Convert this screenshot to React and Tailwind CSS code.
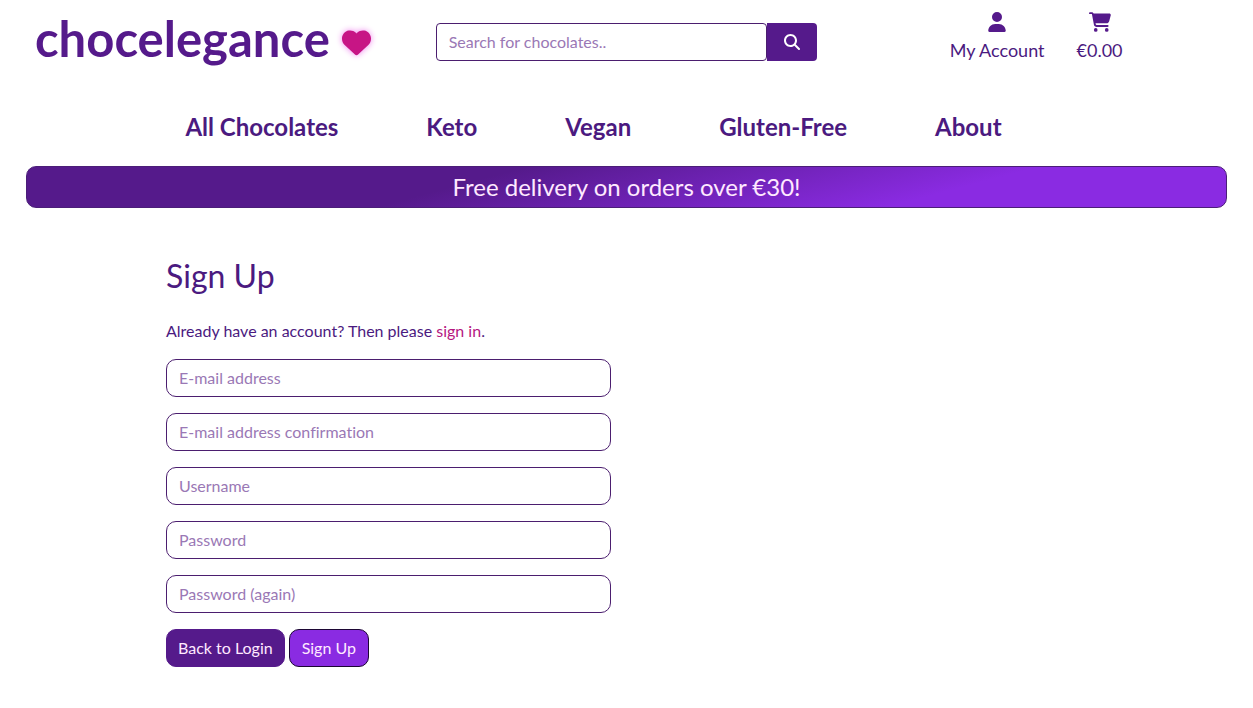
import { FaHeart, FaUser, FaCartShopping, FaMagnifyingGlass } from "react-icons/fa6";

const links = ["All Chocolates", "Keto", "Vegan", "Gluten-Free", "About"];

const fields = [
  { id: "email", label: "E-mail address", type: "email" },
  { id: "email2", label: "E-mail address confirmation", type: "email" },
  { id: "username", label: "Username", type: "text" },
  { id: "password1", label: "Password", type: "password" },
  { id: "password2", label: "Password (again)", type: "password" },
];

function Header() {
  return (
    <header className="grid grid-cols-3 items-start">
      <a href="#" className="mt-2 flex items-center gap-3 pl-[35px] text-[49px] leading-[60px] font-bold text-[#551a8b]">
        chocelegance
        <FaHeart className="mt-2 size-[29px] shrink-0 text-[#c71585] drop-shadow-[0_0_3px_#ee82ee]" aria-hidden="true" />
      </a>
      <form className="mt-[23px] flex px-[18px]" onSubmit={(e) => e.preventDefault()}>
        <input
          type="search"
          aria-label="Search for chocolates"
          placeholder="Search for chocolates.."
          className="h-[38px] min-w-0 flex-1 rounded border border-[#4b1e6f] bg-white px-3 pb-0.5 text-base placeholder:text-[#9a78b5] focus:outline-none"
        />
        <button type="submit" aria-label="Search" className="flex h-[38px] w-[50px] items-center justify-center rounded-r bg-[#551a8b] text-white">
          <FaMagnifyingGlass className="size-4" />
        </button>
      </form>
      <div className="mt-3 flex justify-center gap-8 pr-4 text-lg leading-7">
        <a href="#" className="flex flex-col items-center">
          <FaUser className="size-5 text-[#551a8b]" aria-hidden="true" />
          <span className="mt-1">My Account</span>
        </a>
        <a href="#" className="flex flex-col items-center">
          <FaCartShopping className="h-5 w-[22px] text-[#551a8b]" aria-hidden="true" />
          <span className="mt-1">€0.00</span>
        </a>
      </div>
    </header>
  );
}

export default function App() {
  return (
    <div className="bg-white pb-10 font-['Lato',sans-serif] text-[#4b1a80] [font-variant-ligatures:none]">
      <Header />
      <nav className="mt-[43px] flex justify-center gap-[88px] pr-[66px] text-2xl leading-8 font-bold">
        {links.map((link) => (
          <a key={link} href="#">{link}</a>
        ))}
      </nav>
      <p className="mx-[26px] mt-[23px] h-[42px] rounded-[10px] border border-[#4b1e78] bg-linear-[165deg] from-[#551a8b] from-37% to-[#8a2be2] to-75% text-center text-2xl leading-10 text-[#ffe9ff]">
        Free delivery on orders over €30!
      </p>
      <main className="mx-[166px] mt-12 max-w-[445px]">
        <h1 className="text-[32px] leading-10">Sign Up</h1>
        <p className="mt-[23px] text-base leading-6">
          Already have an account? Then please <a href="#" className="text-[#b5177f]">sign in</a>.
        </p>
        <form className="mt-4 flex flex-col gap-4" onSubmit={(e) => e.preventDefault()}>
          {fields.map((f) => (
            <input
              key={f.id}
              id={f.id}
              type={f.type}
              aria-label={f.label}
              placeholder={f.label}
              className="h-[38px] w-full rounded-[10px] border border-[#4b1e6f] bg-white px-3 pb-0.5 text-base placeholder:text-[#9a78b5] focus:outline-none"
            />
          ))}
          <div className="flex gap-1 text-base text-[#ffe9ff]">
            <a href="#" className="flex h-[38px] items-center rounded-[10px] border border-[#551a8b] bg-[#551a8b] px-[11px]">Back to Login</a>
            <button type="submit" className="h-[38px] rounded-[10px] border border-[#1c0634] bg-[#8a2be2] px-3">Sign Up</button>
          </div>
        </form>
      </main>
    </div>
  );
}
